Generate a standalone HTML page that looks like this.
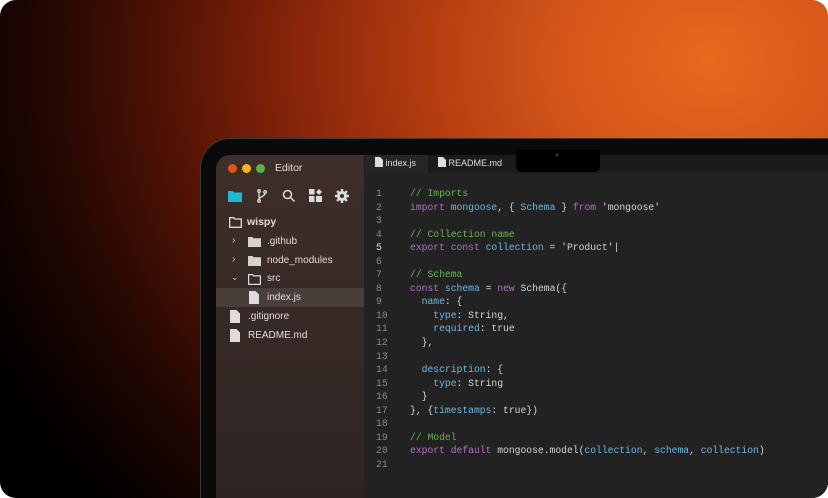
<!DOCTYPE html>
<html><head><meta charset="utf-8"><style>
*{margin:0;padding:0;box-sizing:border-box}
html,body{width:828px;height:498px;overflow:hidden;background:#fff}
#root{position:absolute;left:0;top:0;width:828px;height:498px;border-radius:16px;overflow:hidden;
background:radial-gradient(ellipse 820px 700px at 710px 60px,#e8681c 0%,#d5561a 18%,#b33c10 35%,#8a260a 50%,#561405 65%,#260802 80%,#080100 93%,#000 100%)}
.bezel{position:absolute;left:200px;top:138px;width:628px;height:360px;background:#0a0a0a;border-radius:30px 0 0 0;border:1px solid #3a3a3a;border-right:none;border-bottom:none}
.side{position:absolute;left:216px;top:155px;width:148px;height:343px;background:linear-gradient(#3f2e29,#2e2523);border-top-left-radius:14px}
.tabs{position:absolute;left:364px;top:155px;width:464px;height:18px;background:#1b1b1b}
.tab{position:absolute;top:155px;height:18px;font:9px "Liberation Sans",sans-serif;color:#ddd;line-height:17px;white-space:nowrap}
.editor{position:absolute;left:364px;top:173px;width:464px;height:325px;background:#222}
.notch{position:absolute;left:516px;top:150px;width:84px;height:22px;background:#000;border-radius:0 0 6px 6px}
.cam{position:absolute;left:555px;top:153px;width:4px;height:4px;border-radius:2px;background:#1e2430}
.dot{position:absolute;top:164px;width:9px;height:9px;border-radius:50%}
.t{position:absolute;font:10px "Liberation Sans",sans-serif;color:#e0dcda;white-space:nowrap}
.code{position:absolute;left:376px;top:187px;font:9.7px/13.55px "Liberation Mono",monospace;color:#d6d6d6;white-space:pre}
.n{display:inline-block;width:34px;color:#8a8a8a;text-align:left}
.c{color:#62b84e}.k{color:#b36fc4}.b{color:#6cb9e4}
svg{position:absolute}
</style></head><body><div id="root">
<div class="bezel"></div>
<div class="side"></div>
<div class="tabs">
<div style="position:absolute;left:1px;top:0;width:63px;height:18px;background:#262626"></div>
</div>
<div class="tab" style="left:375px"><svg width="8" height="10" style="position:relative;display:inline-block;vertical-align:-1px" viewBox="0 0 8 10"><path d="M0 0h5l3 3v7H0z" fill="#ddd"/></svg> index.js</div>
<div class="tab" style="left:438px"><svg width="8" height="10" style="position:relative;display:inline-block;vertical-align:-1px" viewBox="0 0 8 10"><path d="M0 0h5l3 3v7H0z" fill="#ddd"/></svg> README.md</div>
<div class="notch"></div><div class="cam"></div>
<div class="editor"></div>
<div class="dot" style="left:228px;background:#e2531f"></div>
<div class="dot" style="left:242px;background:#f2b819"></div>
<div class="dot" style="left:256px;background:#5bb24a"></div>
<div class="t" style="left:275px;top:162px;font-size:10.5px">Editor</div>
<svg style="left:228px;top:190px" width="14" height="12" viewBox="0 0 14 12"><path d="M0 1h5l1 1.5h8V12H0z" fill="#1db8d8"/></svg>
<svg style="left:256px;top:189px" width="12" height="14" viewBox="0 0 12 14" fill="none" stroke="#ddd" stroke-width="1.3"><circle cx="3" cy="2" r="1.3"/><circle cx="9" cy="3" r="1.3"/><circle cx="3" cy="12" r="1.3"/><path d="M3 3.5v7M9 4.5c0 3-6 3-6 6"/></svg>
<svg style="left:282px;top:189px" width="14" height="14" viewBox="0 0 14 14" fill="none" stroke="#ddd" stroke-width="1.5"><circle cx="5.5" cy="5.5" r="4"/><path d="M8.5 8.5l4 4"/></svg>
<svg style="left:309px;top:189px" width="13" height="13" viewBox="0 0 13 13" fill="#ddd"><rect x="0" y="0" width="5.5" height="5.5"/><rect x="0" y="7" width="5.5" height="6"/><rect x="7" y="7" width="6" height="6"/><path d="M10 0l3 3-3 3-3-3z"/></svg>
<svg style="left:335px;top:189px" width="14" height="14" viewBox="0 0 14 14"><g fill="#ddd"><circle cx="7" cy="7" r="5"/><rect x="5.8" y="0" width="2.4" height="14"/><rect x="0" y="5.8" width="14" height="2.4"/><rect x="5.8" y="0" width="2.4" height="14" transform="rotate(45 7 7)"/><rect x="5.8" y="0" width="2.4" height="14" transform="rotate(-45 7 7)"/></g><circle cx="7" cy="7" r="2" fill="#3c2c28"/></svg>
<div style="position:absolute;left:216px;top:288px;width:148px;height:19px;background:#4a3e3b"></div>
<svg style="left:229px;top:217px" width="13" height="11" viewBox="0 0 13 11" fill="none" stroke="#ddd" stroke-width="1.3"><path d="M.7.7h4l1 1.3h6.6v8.3H.7z"/></svg>
<div class="t" style="left:247px;top:216px;font-weight:bold;font-size:10.5px">wispy</div>
<div class="t" style="left:232px;top:235px;color:#ccc">›</div>
<svg style="left:248px;top:237px" width="13" height="10" viewBox="0 0 13 10"><path d="M0 0h4.5l1 1.3H13V10H0z" fill="#d6d2d0"/></svg>
<div class="t" style="left:267px;top:236px">.github</div>
<div class="t" style="left:232px;top:254px;color:#ccc">›</div>
<svg style="left:248px;top:256px" width="13" height="10" viewBox="0 0 13 10"><path d="M0 0h4.5l1 1.3H13V10H0z" fill="#d6d2d0"/></svg>
<div class="t" style="left:267px;top:255px">node_modules</div>
<div class="t" style="left:231px;top:272px;color:#ccc;font-size:9px">⌄</div>
<svg style="left:248px;top:274px" width="13" height="11" viewBox="0 0 13 11" fill="none" stroke="#ddd" stroke-width="1.2"><path d="M.6.6h4l1 1.3h6.8v8.5H.6z"/></svg>
<div class="t" style="left:267px;top:273px">src</div>
<svg style="left:249px;top:291px" width="10" height="13" viewBox="0 0 10 13"><path d="M0 0h6.5l3.5 3.5V13H0z" fill="#e0dcda"/></svg>
<div class="t" style="left:267px;top:292px">index.js</div>
<svg style="left:230px;top:310px" width="10" height="13" viewBox="0 0 10 13"><path d="M0 0h6.5l3.5 3.5V13H0z" fill="#e0dcda"/></svg>
<div class="t" style="left:248px;top:311px">.gitignore</div>
<svg style="left:230px;top:329px" width="10" height="13" viewBox="0 0 10 13"><path d="M0 0h6.5l3.5 3.5V13H0z" fill="#e0dcda"/></svg>
<div class="t" style="left:248px;top:330px">README.md</div>
<div class="code"><span class="n">1</span><span class="c">// Imports</span>
<span class="n">2</span><span class="k">import</span> <span class="b">mongoose</span>, { <span class="b">Schema</span> } <span class="k">from</span> 'mongoose'
<span class="n">3</span>
<span class="n">4</span><span class="c">// Collection name</span>
<span class="n" style="color:#ddd">5</span><span class="k">export const</span> <span class="b">collection</span> = 'Product'|
<span class="n">6</span>
<span class="n">7</span><span class="c">// Schema</span>
<span class="n">8</span><span class="k">const</span> <span class="b">schema</span> = <span class="k">new</span> Schema({
<span class="n">9</span>  <span class="b">name</span>: {
<span class="n">10</span>    <span class="b">type</span>: String,
<span class="n">11</span>    <span class="b">required</span>: true
<span class="n">12</span>  },
<span class="n">13</span>
<span class="n">14</span>  <span class="b">description</span>: {
<span class="n">15</span>    <span class="b">type</span>: String
<span class="n">16</span>  }
<span class="n">17</span>}, {<span class="b">timestamps</span>: true})
<span class="n">18</span>
<span class="n">19</span><span class="c">// Model</span>
<span class="n">20</span><span class="k">export default</span> mongoose.model(<span class="b">collection</span>, <span class="b">schema</span>, <span class="b">collection</span>)
<span class="n">21</span></div>
</div></body></html>
